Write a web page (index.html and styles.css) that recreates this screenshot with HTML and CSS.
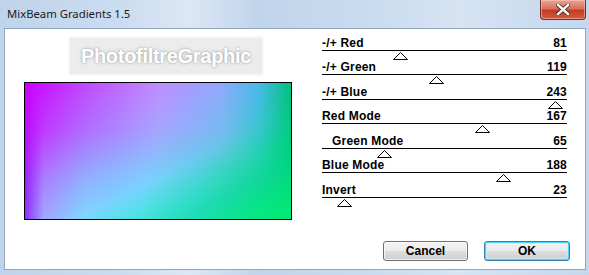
FILE: index.html
```html
<!DOCTYPE html>
<html lang="en">
<head>
    <meta charset="UTF-8">
    <title>MixBeam Gradients 1.5</title>
    <link rel="stylesheet" href="styles.css">
</head>
<body>
    <div class="window">
        <div class="titlebar">
            <span class="title">MixBeam Gradients 1.5</span>
            <button class="close" aria-label="Close">
                <svg width="14" height="11" viewBox="0 0 14 11">
                    <path d="M2 1 L12 10 M12 1 L2 10" stroke="#4a2018" stroke-width="4" stroke-linecap="square"/>
                    <path d="M2 1 L12 10 M12 1 L2 10" stroke="#fff" stroke-width="2.4" stroke-linecap="square"/>
                </svg>
            </button>
        </div>

        <div class="client">
            <div class="main">
                <div class="preview">
                    <div class="watermark">PhotofiltreGraphic</div>
                    <div class="gradient"></div>
                </div>

                <div class="sliders">
                    <div class="slider" style="--v:81">
                        <div class="label"><span>-/+ Red</span><span>81</span></div>
                        <div class="track"><svg class="thumb" viewBox="0 0 15 8"><polygon points="7.5,0.5 14.5,7.5 0.5,7.5"/></svg></div>
                    </div>
                    <div class="slider" style="--v:119">
                        <div class="label"><span>-/+ Green</span><span>119</span></div>
                        <div class="track"><svg class="thumb" viewBox="0 0 15 8"><polygon points="7.5,0.5 14.5,7.5 0.5,7.5"/></svg></div>
                    </div>
                    <div class="slider" style="--v:243">
                        <div class="label"><span>-/+ Blue</span><span>243</span></div>
                        <div class="track"><svg class="thumb" viewBox="0 0 15 8"><polygon points="7.5,0.5 14.5,7.5 0.5,7.5"/></svg></div>
                    </div>
                    <div class="slider" style="--v:167">
                        <div class="label"><span>Red Mode</span><span>167</span></div>
                        <div class="track"><svg class="thumb" viewBox="0 0 15 8"><polygon points="7.5,0.5 14.5,7.5 0.5,7.5"/></svg></div>
                    </div>
                    <div class="slider" style="--v:65">
                        <div class="label indent"><span>Green Mode</span><span>65</span></div>
                        <div class="track"><svg class="thumb" viewBox="0 0 15 8"><polygon points="7.5,0.5 14.5,7.5 0.5,7.5"/></svg></div>
                    </div>
                    <div class="slider" style="--v:188">
                        <div class="label"><span>Blue Mode</span><span>188</span></div>
                        <div class="track"><svg class="thumb" viewBox="0 0 15 8"><polygon points="7.5,0.5 14.5,7.5 0.5,7.5"/></svg></div>
                    </div>
                    <div class="slider" style="--v:23">
                        <div class="label"><span>Invert</span><span>23</span></div>
                        <div class="track"><svg class="thumb" viewBox="0 0 15 8"><polygon points="7.5,0.5 14.5,7.5 0.5,7.5"/></svg></div>
                    </div>
                </div>
            </div>

            <div class="buttons">
                <button class="btn cancel">Cancel</button>
                <button class="btn ok">OK</button>
            </div>
        </div>
    </div>
</body>
</html>
```

FILE: styles.css
```css
* {
    margin: 0;
    padding: 0;
    box-sizing: border-box;
}

body {
    width: 589px;
    height: 275px;
    overflow: hidden;
    background: #c5d8ee;
}

.window {
    width: 589px;
    height: 275px;
    display: flex;
    flex-direction: column;
    padding: 0 3px 5px 4px;
    background: linear-gradient(90deg, #bfd3ea 0%, #cadcf0 20%, #dbe7f5 32%, #c0d4eb 44%, #c9dbef 62%, #d6e4f3 78%, #c4d7ed 100%);
}

/* title bar */
.titlebar {
    height: 28px;
    display: flex;
    align-items: flex-start;
    justify-content: space-between;
    margin-right: -3px;
}

.title {
    font-family: 'Noto Sans', sans-serif;
    font-size: 11.3px;
    color: #1a1a1a;
    padding: 6px 0 0 3px;
    line-height: 16px;
}

.close {
    width: 46px;
    height: 20px;
    margin-right: 3px;
    border: 1px solid #6b2f26;
    border-top: none;
    border-radius: 0 0 4px 4px;
    background: linear-gradient(#e9a597 0%, #d8715d 45%, #c23c24 55%, #d45a3e 100%);
    box-shadow: inset 0 0 0 1px rgba(255, 210, 200, 0.5);
    display: flex;
    justify-content: center;
    align-items: center;
}

/* white client area */
.client {
    flex: 1;
    background: #fff;
    border: 1px solid #8fa5c0;
    display: flex;
    flex-direction: column;
}

.main {
    display: flex;
}

.preview {
    width: 317px;
    flex: none;
    padding-left: 19px;
}

.watermark {
    width: 192px;
    height: 36px;
    margin: 9px 0 0 46px;
    background: #ececec;
    box-shadow: 0 0 3px 1px #f0f0f0;
    color: #fff;
    font-family: 'Liberation Sans', Arial, sans-serif;
    font-weight: bold;
    font-size: 20px;
    line-height: 36px;
    letter-spacing: -0.3px;
    text-align: center;
    text-shadow: 0 0 2px rgba(0, 0, 0, 0.3), 0 0 4px rgba(0, 0, 0, 0.15);
}

/* preview: bottom row colours underneath, top row colours fading out downwards */
.gradient {
    position: relative;
    width: 268px;
    height: 138px;
    margin-top: 8px;
    border: 1px solid #000;
    background: linear-gradient(90deg, #8a30ff 0%, #a0a8ff 7%, #80d8ff 22%, #60eeff 45%, #38f0e0 65%, #10f090 88%, #00f070 100%);
}

.gradient::before {
    content: '';
    position: absolute;
    inset: 0;
    background: linear-gradient(90deg, #cc00ff 0%, #c050ff 25%, #c08cff 50%, #90a8ff 74%, #48b8e8 88%, #00c080 100%);
    -webkit-mask-image: linear-gradient(to bottom, #000 0%, rgba(0, 0, 0, 0.75) 35%, rgba(0, 0, 0, 0.3) 70%, transparent 100%);
    mask-image: linear-gradient(to bottom, #000 0%, rgba(0, 0, 0, 0.75) 35%, rgba(0, 0, 0, 0.3) 70%, transparent 100%);
}

.gradient::after {
    content: '';
    position: absolute;
    inset: 0;
    background: linear-gradient(to bottom right, rgba(0, 210, 140, 0) 60%, rgba(0, 205, 140, 0.5) 80%, rgba(0, 235, 115, 0.75) 100%);
}

/* sliders */
.sliders {
    width: 245px;
    padding-top: 7px;
    font-family: 'Liberation Sans', Arial, sans-serif;
    font-weight: bold;
    font-size: 12px;
    letter-spacing: 0.2px;
    color: #000;
}

.slider:nth-child(odd):not(:first-child) {
    margin-top: 1px;
}

.label {
    display: flex;
    justify-content: space-between;
    height: 14px;
    line-height: 14px;
}

.label.indent {
    padding-left: 10px;
}

.track {
    border-top: 1px solid #000;
    height: 10px;
    padding-top: 1px;
}

.thumb {
    display: block;
    width: 15px;
    height: 8px;
    margin-left: calc(var(--v) / 255 * 100% - 7px);
}

.thumb polygon {
    fill: #fff;
    stroke: #000;
    stroke-width: 1;
}

/* buttons */
.buttons {
    margin-top: auto;
    display: flex;
    justify-content: flex-end;
    gap: 16px;
    padding: 0 15px 8px 0;
}

.btn {
    height: 20px;
    border: 1px solid #707070;
    border-radius: 3px;
    background: linear-gradient(#f2f2f2 0%, #ebebeb 50%, #dddddd 51%, #cfcfcf 100%);
    box-shadow: inset 0 0 0 1px rgba(255, 255, 255, 0.7);
    font-family: 'Liberation Sans', Arial, sans-serif;
    font-weight: bold;
    font-size: 12px;
    color: #000;
}

.cancel {
    width: 85px;
}

.ok {
    width: 86px;
    border-color: #3c7fb1;
    box-shadow: inset 0 0 0 1px #48d3fb, inset 0 0 0 2px rgba(200, 240, 255, 0.6);
}
```
